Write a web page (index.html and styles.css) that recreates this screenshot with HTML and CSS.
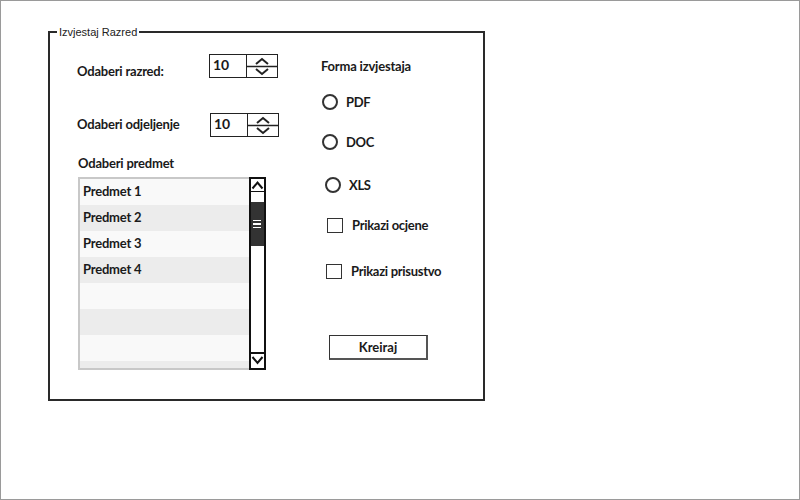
FILE: index.html
```html
<!DOCTYPE html>
<html>
<head>
<meta charset="utf-8">
<link rel="stylesheet" href="styles.css">
</head>
<body>
<div class="screen">
  <div class="panel">
    <div class="legend">Izvjestaj Razred</div>
    <div class="col-left">
      <div class="field field-1">
        <span class="label">Odaberi razred:</span>
        <div class="spinner">
          <span class="spin-value">10</span>
          <span class="spin-arrows">
            <svg width="30" height="23" viewBox="0 0 30 23"><path d="M-3 11.5H30" stroke="#222" stroke-width="1.5"/><path d="M9 9l6-5 6 5" fill="none" stroke="#222" stroke-width="2"/><path d="M9 14l6 5 6-5" fill="none" stroke="#222" stroke-width="2"/></svg>
          </span>
        </div>
      </div>
      <div class="field field-2">
        <span class="label">Odaberi odjeljenje</span>
        <div class="spinner">
          <span class="spin-value">10</span>
          <span class="spin-arrows">
            <svg width="30" height="23" viewBox="0 0 30 23"><path d="M-3 11.5H30" stroke="#222" stroke-width="1.5"/><path d="M9 9l6-5 6 5" fill="none" stroke="#222" stroke-width="2"/><path d="M9 14l6 5 6-5" fill="none" stroke="#222" stroke-width="2"/></svg>
          </span>
        </div>
      </div>
      <div class="list-label">Odaberi predmet</div>
      <div class="listbox">
        <div class="rows">
          <div class="row">Predmet 1</div>
          <div class="row alt">Predmet 2</div>
          <div class="row">Predmet 3</div>
          <div class="row alt">Predmet 4</div>
          <div class="row"></div>
          <div class="row alt"></div>
          <div class="row"></div>
          <div class="row alt"></div>
        </div>
        <div class="scrollbar">
          <div class="sb-btn sb-up"><svg width="13" height="13" viewBox="0 0 13 13"><path d="M1.5 9.5l5-6 5 6" fill="none" stroke="#111" stroke-width="2"/><path d="M0 13H13" stroke="#111" stroke-width="2"/></svg></div>
          <div class="sb-track">
            <div class="sb-thumb"><span></span><span></span><span></span></div>
          </div>
          <div class="sb-btn sb-down"><svg width="13" height="14" viewBox="0 0 13 14"><path d="M0 1H13" stroke="#111" stroke-width="2"/><path d="M1.5 5l5 6 5-6" fill="none" stroke="#111" stroke-width="2"/></svg></div>
        </div>
      </div>
    </div>
    <div class="col-right">
      <div class="section-title">Forma izvjestaja</div>
      <div class="option opt-pdf"><span class="radio"></span><span>PDF</span></div>
      <div class="option opt-doc"><span class="radio"></span><span>DOC</span></div>
      <div class="option opt-xls"><span class="radio"></span><span>XLS</span></div>
      <div class="option chk-1"><span class="check"></span><span>Prikazi ocjene</span></div>
      <div class="option chk-2"><span class="check"></span><span>Prikazi prisustvo</span></div>
      <button class="btn">Kreiraj</button>
    </div>
  </div>
</div>
</body>
</html>
```

FILE: styles.css
```css
* { box-sizing: border-box; }
html, body { margin: 0; padding: 0; background: #fff; }
body { font-family: Lato, "Open Sans", sans-serif; color: #1a1a1a; }

.screen {
  width: 800px;
  height: 500px;
  border: 1px solid #9a9a9a;
  padding: 30px 0 0 47px;
}

.panel {
  position: relative;
  width: 437px;
  height: 370px;
  border: 2px solid #2a2a2a;
  display: flex;
}

.legend {
  position: absolute;
  top: -9px;
  left: 7px;
  padding: 0 2px 0 2px;
  background: #fff;
  font-family: "Liberation Sans", Arial, sans-serif;
  font-size: 11px;
  line-height: 16px;
  color: #222;
}

.col-left {
  width: 244px;
  padding: 21px 0 0 27px;
  display: flex;
  flex-direction: column;
}

.field {
  display: flex;
  align-items: center;
  height: 24px;
}
.field-1 .label { margin-top: 9px; }
.field-2 { margin-top: 35px; }
.field-2 .label { margin-top: -3px; }
.field-2 .spinner { margin-left: 1px; }

.label {
  width: 132px;
  font-size: 13px;
  font-weight: 700;
  letter-spacing: -0.2px;
}

.spinner {
  display: flex;
  width: 69px;
  height: 24px;
  border: 1.5px solid #222;
}
.spin-value {
  width: 37px;
  border-right: 1.5px solid #222;
  font-size: 14px;
  font-weight: 700;
  padding-left: 3px;
  line-height: 20px;
}
.spin-arrows { display: flex; width: 30px; }

.list-label {
  margin-top: 18px;
  padding-left: 1px;
  font-size: 13px;
  font-weight: 700;
  letter-spacing: -0.2px;
  line-height: 17px;
}

.listbox {
  display: flex;
  margin-top: 5px;
  margin-left: 1px;
  width: 188px;
  height: 193px;
}

.rows {
  width: 171px;
  border: 2px solid #c8c8c8;
  border-right: none;
  overflow: hidden;
}
.row {
  height: 26px;
  background: #f9f9f9;
  font-size: 13px;
  font-weight: 700;
  letter-spacing: -0.2px;
  line-height: 24px;
  padding-left: 3px;
}
.row.alt { background: #ececec; }

.scrollbar {
  width: 17px;
  border: 2px solid #111;
  display: flex;
  flex-direction: column;
  background: #fff;
}
.sb-btn { height: 15px; display: flex; }
.sb-down { height: 16px; }
.sb-track { flex: 1; padding-top: 8px; }
.sb-thumb {
  height: 44px;
  background: #333;
  display: flex;
  flex-direction: column;
  align-items: flex-start;
  justify-content: center;
  gap: 2px;
  padding-left: 2px;
}
.sb-thumb span { display: block; width: 8px; height: 1.5px; background: #fff; }

.col-right {
  flex: 1;
  padding: 24px 0 0 27px;
  display: flex;
  flex-direction: column;
  align-items: flex-start;
}

.section-title {
  font-size: 13px;
  font-weight: 700;
  letter-spacing: -0.2px;
  line-height: 18px;
}

.option {
  display: flex;
  align-items: center;
  font-size: 13px;
  font-weight: 700;
  letter-spacing: -0.3px;
  height: 18px;
}
.opt-pdf { margin-top: 18px; padding-left: 1px; }
.opt-doc { margin-top: 22px; padding-left: 1px; }
.opt-xls { margin-top: 25px; padding-left: 4px; }
.chk-1 { margin-top: 22px; padding-left: 6px; }
.chk-2 { margin-top: 28px; padding-left: 5px; }

.radio {
  width: 16px;
  height: 16px;
  border: 2.5px solid #333;
  border-radius: 50%;
  margin-right: 8px;
}
.check {
  width: 16px;
  height: 15px;
  border: 1.5px solid #333;
  margin-right: 9px;
}

.btn {
  margin-top: 55px;
  margin-left: 8px;
  width: 99px;
  height: 25px;
  background: #fff;
  border: 1px solid #333;
  border-right: 2px solid #555;
  border-bottom: 2px solid #555;
  font-family: Lato, sans-serif;
  font-size: 13px;
  font-weight: 700;
  color: #1a1a1a;
  padding: 0;
}
```
